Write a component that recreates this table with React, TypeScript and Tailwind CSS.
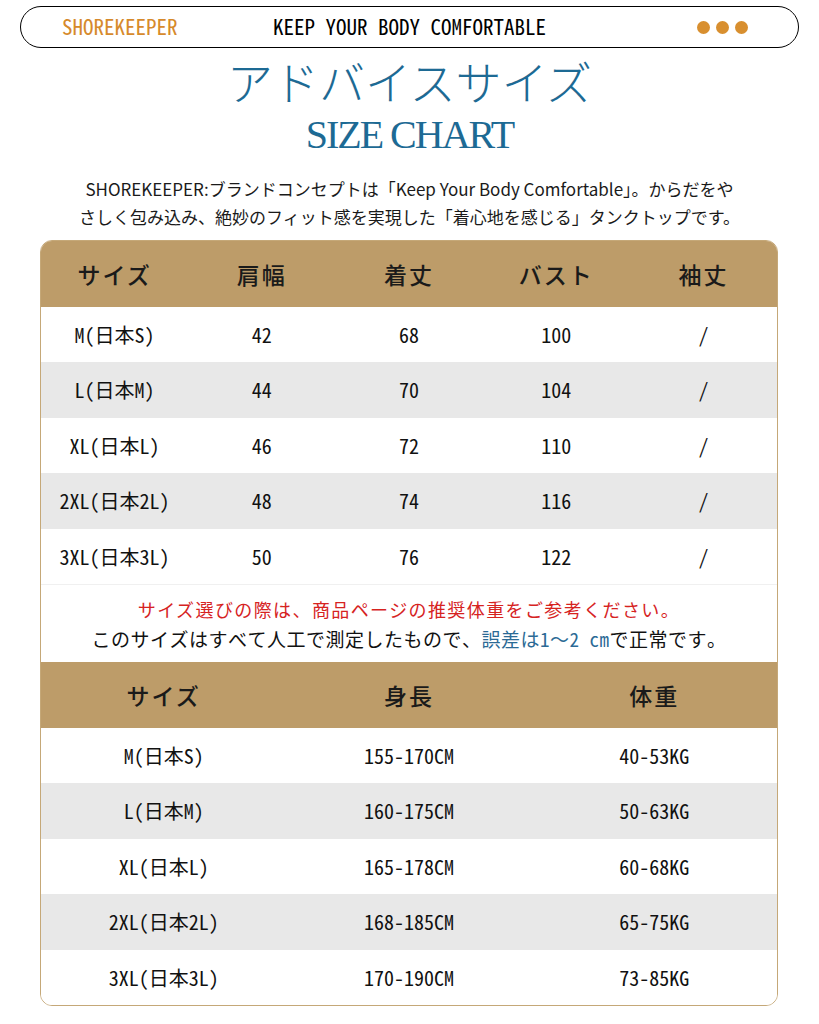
import React from 'react';

const mono = '"Noto Sans Mono CJK JP", "Noto Sans CJK JP", monospace';

const topRows = [
  ['M(日本S)', '42', '68', '100', '/'],
  ['L(日本M)', '44', '70', '104', '/'],
  ['XL(日本L)', '46', '72', '110', '/'],
  ['2XL(日本2L)', '48', '74', '116', '/'],
  ['3XL(日本3L)', '50', '76', '122', '/'],
];

const bottomRows = [
  ['M(日本S)', '155-170CM', '40-53KG'],
  ['L(日本M)', '160-175CM', '50-63KG'],
  ['XL(日本L)', '165-178CM', '60-68KG'],
  ['2XL(日本2L)', '168-185CM', '65-75KG'],
  ['3XL(日本3L)', '170-190CM', '73-85KG'],
];

const rowHeights = ['h-[55px]', 'h-[56px]', 'h-[55px]', 'h-[56px]', 'h-[55px]'];

function HeaderRow({ cells, cols }: { cells: string[]; cols: string }) {
  return (
    <div className={`grid ${cols} h-[66px] bg-[#bd9c69] items-center`}>
      {cells.map((c) => (
        <div key={c} className="text-center text-[23px] font-medium text-[#1a1a1a] tracking-[2px]">
          {c}
        </div>
      ))}
    </div>
  );
}

function DataRows({ rows, cols }: { rows: string[][]; cols: string }) {
  return (
    <>
      {rows.map((r, i) => (
        <div
          key={r[0]}
          className={`grid ${cols} ${rowHeights[i]} items-center ${i % 2 === 1 ? 'bg-[#e8e8e8]' : 'bg-white'}`}
          style={{ fontFamily: mono }}
        >
          {r.map((c, j) => (
            <div key={j} className="text-center text-[20px] text-[#111]">
              {c}
            </div>
          ))}
        </div>
      ))}
    </>
  );
}

export default function App() {
  return (
    <div
      className="w-[819px] h-[1024px] bg-white overflow-hidden pt-[6px]"
      style={{ fontFamily: '"Noto Sans CJK JP", sans-serif' }}
    >
      <div className="mx-[20px] h-[42px] border-[1.5px] border-black rounded-full flex items-center" style={{ fontFamily: mono }}>
        <span className="ml-[41px] w-[211px] text-[21px] text-[#d68a2c]">SHOREKEEPER</span>
        <span className="text-[21px] text-black">KEEP YOUR BODY COMFORTABLE</span>
        <div className="ml-auto mr-[50px] flex gap-[6px]">
          <span className="w-[13px] h-[13px] rounded-full bg-[#d88f2f]" />
          <span className="w-[13px] h-[13px] rounded-full bg-[#d88f2f]" />
          <span className="w-[13px] h-[13px] rounded-full bg-[#d88f2f]" />
        </div>
      </div>

      <div className="flex flex-col items-center text-[#1d6a94]">
        <div className="mt-[0px] text-[46px] leading-[64px] font-light">アドバイスサイズ</div>
        <div
          className="text-[40px] leading-[48px] -mt-[1px] tracking-[-2px]"
          style={{ fontFamily: '"Liberation Serif", serif' }}
        >
          SIZE CHART
        </div>
      </div>

      <div className="mt-[16px] text-center text-[17px] leading-[28px] text-[#1a1a1a]">
        <p>SHOREKEEPER:ブランドコンセプトは「Keep Your Body Comfortable」。からだをや</p>
        <p>さしく包み込み、絶妙のフィット感を実現した「着心地を感じる」タンクトップです。</p>
      </div>

      <div className="mt-[9px] mx-[40px] w-[738px] rounded-[12px] border border-[#c5a878] overflow-hidden">
        <HeaderRow cells={['サイズ', '肩幅', '着丈', 'バスト', '袖丈']} cols="grid-cols-5" />
        <DataRows rows={topRows} cols="grid-cols-5" />

        <div className="h-[78px] bg-white border-t border-[#f0f0f0] flex flex-col items-center justify-center">
          <p className="text-[18px] leading-[30px] text-[#d6231f] tracking-[1.4px]">
            サイズ選びの際は、商品ページの推奨体重をご参考ください。
          </p>
          <p className="text-[19px] leading-[30px] text-[#111] tracking-[0.5px]" style={{ fontFamily: mono }}>
            このサイズはすべて人工で測定したもので、<span className="text-[#2b6a95]">誤差は1～2 cm</span>で正常です。
          </p>
        </div>

        <HeaderRow cells={['サイズ', '身長', '体重']} cols="grid-cols-3" />
        <DataRows rows={bottomRows} cols="grid-cols-3" />
      </div>
    </div>
  );
}
